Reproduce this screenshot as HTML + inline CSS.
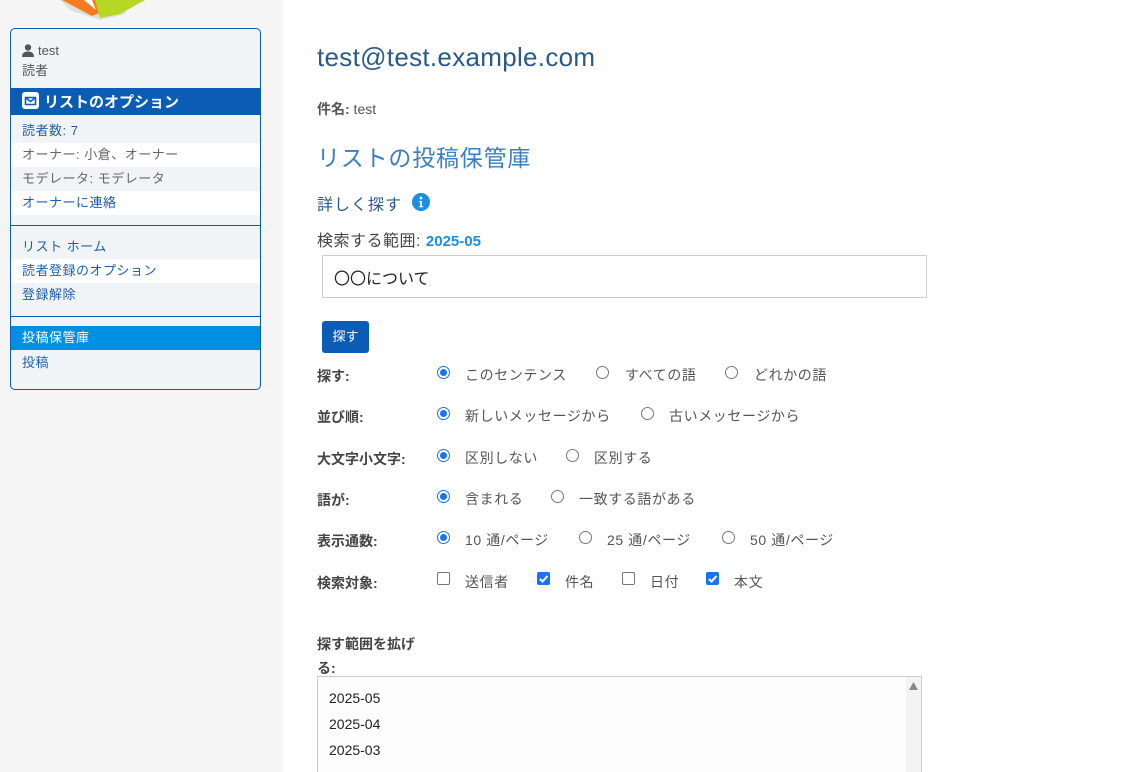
<!DOCTYPE html>
<html><head><meta charset="utf-8"><style>
*{margin:0;padding:0;box-sizing:border-box}
html,body{width:1131px;height:772px;overflow:hidden}
body{background:#fff;font-family:"Liberation Sans","Noto Sans CJK JP",sans-serif;color:#444;position:relative}
.a{position:absolute;white-space:nowrap}
#side{position:absolute;left:0;top:0;width:283px;height:772px;background:#f5f5f5}
#box{position:absolute;left:10px;top:28px;width:251px;height:362px;border:1px solid #0b5cb5;border-radius:5px;background:#f1f4f7;overflow:hidden}
.row{position:absolute;left:0;width:249px;height:24px;font-size:13px;padding-left:11px;line-height:24px;letter-spacing:.5px;color:#666}
.w{background:#fff}
.lnk{color:#1f5fa8}
.lbl{font-size:14px;font-weight:bold;color:#444}
.r{position:absolute;width:13px;height:13px;border:1px solid #777;border-radius:50%;background:#fff}
.r.on{border-color:#1a73e8}
.r.on::after{content:"";position:absolute;left:2px;top:2px;width:7px;height:7px;border-radius:50%;background:#1a73e8}
.c{position:absolute;width:13px;height:13px;border:1px solid #777;border-radius:2px;background:#fff}
.c.on{background:#1a73e8;border-color:#1a73e8}
.t{font-size:14px;color:#555;letter-spacing:.6px}
</style></head><body>
<div id="side">
<svg class="a" style="left:40px;top:0" width="130" height="24"><polygon points="20,0 90,0 85,14 60,20 30,10" fill="#bbb" opacity=".4"/><polygon points="22,0 55,0 62,12 52,16" fill="#f47b20"/><polygon points="55,0 105,0 80,14 60,18" fill="#b5d822"/><polygon points="44,0 52,0 56,10" fill="#fff"/></svg>
<div id="box">
<svg class="a" style="left:11px;top:15px" width="12" height="13" viewBox="0 0 12 13"><circle cx="6" cy="3.5" r="3.2" fill="#555"/><path d="M0 13 Q0 7.5 6 7.5 Q12 7.5 12 13Z" fill="#555"/></svg>
<div class="a" style="left:27px;top:14px;font-size:13px;color:#555">test</div>
<div class="a" style="left:11px;top:31px;font-size:13px;color:#555">読者</div>
<div class="a" style="left:0;top:59px;width:249px;height:27px;background:#0b5cb5"></div>
<svg class="a" style="left:11px;top:63px" width="17" height="17" viewBox="0 0 17 17"><rect x="0" y="0" width="17" height="17" rx="3" fill="#fff"/><path d="M3.5 5.5h10v7h-10z" fill="none" stroke="#0b5cb5" stroke-width="1.6"/><path d="M3.5 5.5l5 4 5-4" fill="none" stroke="#0b5cb5" stroke-width="1.6"/></svg>
<div class="a" style="left:33px;top:62px;font-size:15px;font-weight:bold;color:#fff">リストのオプション</div>
<div class="row lnk" style="top:90px">読者数: 7</div>
<div class="row w" style="top:114px">オーナー: 小倉、オーナー</div>
<div class="row" style="top:138px">モデレータ: モデレータ</div>
<div class="row w lnk" style="top:162px">オーナーに連絡</div>
<div class="a" style="left:0;top:196px;width:249px;height:1px;background:#0b5cb5"></div>
<div class="row lnk" style="top:206px">リスト ホーム</div>
<div class="row w lnk" style="top:230px">読者登録のオプション</div>
<div class="row lnk" style="top:254px">登録解除</div>
<div class="a" style="left:0;top:287px;width:249px;height:1px;background:#0b5cb5"></div>
<div class="row" style="top:297px;background:#0090e3;color:#fff">投稿保管庫</div>
<div class="row lnk" style="top:322px">投稿</div>
</div>
</div>
<div class="a" style="left:317px;top:42px;font-size:26px;color:#2b5a8a;letter-spacing:.3px">test@test.example.com</div>
<div class="a" style="left:317px;top:99px;font-size:14px;color:#555"><b>件名:</b> test</div>
<div class="a" style="left:317px;top:139px;font-size:23px;color:#3a7fc0;letter-spacing:.8px">リストの投稿保管庫</div>
<div class="a" style="left:317px;top:191px;font-size:16px;color:#2b5a8a;letter-spacing:1px">詳しく探す</div>
<svg class="a" style="left:412px;top:193px" width="18" height="18"><circle cx="9" cy="9" r="9" fill="#1a8fe3"/><circle cx="9" cy="5" r="1.4" fill="#fff"/><path d="M7 8h3v5h1.2v1.2H7V13h1.2V9.2H7z" fill="#fff"/></svg>
<div class="a" style="left:317px;top:227px;font-size:16px;color:#444;letter-spacing:.5px">検索する範囲: <b style="color:#1a8fe3;font-size:15px;letter-spacing:0">2025-05</b></div>
<div class="a" style="left:322px;top:255px;width:605px;height:43px;border:1px solid #ccc;font-size:16px;color:#222;padding:9px 0 0 11px">〇〇について</div>
<div class="a" style="left:322px;top:321px;width:47px;height:32px;background:#0b5cb5;border-radius:3px;color:#fff;font-size:13px;text-align:center;line-height:31px">探す</div>

<div class="a lbl" style="left:317px;top:366px">探す:</div>
<div class="r on" style="left:437px;top:366px"></div><div class="a t" style="left:465px;top:365px">このセンテンス</div>
<div class="r" style="left:596px;top:366px"></div><div class="a t" style="left:625px;top:365px">すべての語</div>
<div class="r" style="left:725px;top:366px"></div><div class="a t" style="left:754px;top:365px">どれかの語</div>

<div class="a lbl" style="left:317px;top:407px">並び順:</div>
<div class="r on" style="left:437px;top:407px"></div><div class="a t" style="left:465px;top:406px">新しいメッセージから</div>
<div class="r" style="left:641px;top:407px"></div><div class="a t" style="left:669px;top:406px">古いメッセージから</div>

<div class="a lbl" style="left:317px;top:449px">大文字小文字:</div>
<div class="r on" style="left:437px;top:449px"></div><div class="a t" style="left:465px;top:448px">区別しない</div>
<div class="r" style="left:566px;top:449px"></div><div class="a t" style="left:594px;top:448px">区別する</div>

<div class="a lbl" style="left:317px;top:490px">語が:</div>
<div class="r on" style="left:437px;top:490px"></div><div class="a t" style="left:465px;top:489px">含まれる</div>
<div class="r" style="left:551px;top:490px"></div><div class="a t" style="left:579px;top:489px">一致する語がある</div>

<div class="a lbl" style="left:317px;top:531px">表示通数:</div>
<div class="r on" style="left:437px;top:531px"></div><div class="a t" style="left:465px;top:530px">10 通/ページ</div>
<div class="r" style="left:579px;top:531px"></div><div class="a t" style="left:607px;top:530px">25 通/ページ</div>
<div class="r" style="left:722px;top:531px"></div><div class="a t" style="left:750px;top:530px">50 通/ページ</div>

<div class="a lbl" style="left:317px;top:573px">検索対象:</div>
<div class="c" style="left:437px;top:572px"></div><div class="a t" style="left:465px;top:572px">送信者</div>
<div class="c on" style="left:537px;top:572px"><svg width="11" height="11" style="position:absolute;left:0;top:0"><path d="M2 6l2.5 2.5L9.5 3" stroke="#fff" stroke-width="2" fill="none"/></svg></div><div class="a t" style="left:565px;top:572px">件名</div>
<div class="c" style="left:622px;top:572px"></div><div class="a t" style="left:650px;top:572px">日付</div>
<div class="c on" style="left:706px;top:572px"><svg width="11" height="11" style="position:absolute;left:0;top:0"><path d="M2 6l2.5 2.5L9.5 3" stroke="#fff" stroke-width="2" fill="none"/></svg></div><div class="a t" style="left:734px;top:572px">本文</div>

<div class="a lbl" style="left:317px;top:632px;line-height:24px">探す範囲を拡げ<br>る:</div>
<div class="a" style="left:317px;top:676px;width:605px;height:100px;border:1px solid #ccc;background:#fdfdfd">
<div class="a" style="right:0;top:0;width:15px;height:100px;background:#f3f3f3"></div>
<svg class="a" style="right:3px;top:5px" width="9" height="8"><path d="M0 8L4.5 0 9 8z" fill="#888"/></svg>
<div class="a" style="left:11px;top:8px;font-size:14px;color:#222;line-height:26px">2025-05<br>2025-04<br>2025-03</div>
</div>
</body></html>
